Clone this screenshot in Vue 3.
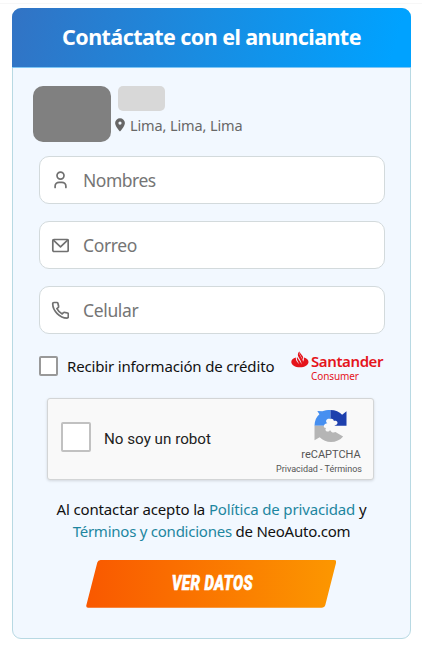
<script setup>
import { ref } from 'vue'

const fields = [
  { id: 'name', label: 'Nombres', type: 'text' },
  { id: 'mail', label: 'Correo', type: 'email' },
  { id: 'phone', label: 'Celular', type: 'tel' },
]
const values = ref({ name: '', mail: '', phone: '' })
</script>

<template>
  <main class="page">
    <section class="card">
      <header class="header"><h1>Contáctate con el anunciante</h1></header>
      <div class="seller">
        <div class="avatar"></div>
        <div class="seller-info">
          <div class="seller-name"></div>
          <div class="location">
            <svg width="10" height="14" viewBox="0 0 10 14"><path fill="#666" fill-rule="evenodd" d="M5 .3A4.900 4.900 0 0 0 .1 5.100C.1 8.500 5 13.600 5 13.600S9.900 8.500 9.900 5.100A4.900 4.900 0 0 0 5 .3ZM5 3.500a1.600 1.600 0 1 1 0 3.200 1.600 1.600 0 0 1 0-3.200Z" /></svg>
            <span>Lima, Lima, Lima</span>
          </div>
        </div>
      </div>

      <form class="form" @submit.prevent>
        <label v-for="f in fields" :key="f.id" class="field">
          <svg class="field-icon" width="18" height="18" viewBox="0 0 18 18" fill="none" stroke="#707070" stroke-width="1.700" stroke-linecap="round" stroke-linejoin="round">
            <template v-if="f.id === 'name'">
              <circle cx="9.500" cy="4.600" r="3.500" />
              <path d="M4.100 16.500v-1.200a4 4 0 0 1 4-4h2.800a4 4 0 0 1 4 4v1.200" />
            </template>
            <template v-else-if="f.id === 'mail'">
              <rect x="1.800" y="3.500" width="15.400" height="12" rx="1.200" />
              <path d="M2.400 4.200 9.500 10.800l7.100-6.600" />
            </template>
            <path v-else transform="translate(.5 .3)" d="M2.500 1.200h2.900q.8 0 1 .8l.7 3q.2.7-.4 1.200L5.400 7.400a13 13 0 0 0 5.300 5.300l1.200-1.300q.5-.6 1.200-.4l2.900.7q.8.2.8 1v2.800q0 1.300-1.300 1.300C8.300 16.500 1.300 9.700 1.200 2.500q0-1.300 1.300-1.300Z" />
          </svg>
          <input v-model="values[f.id]" :type="f.type" :class="f.id" :placeholder="f.label" />
        </label>

        <div class="credit">
          <span class="checkbox"></span>
          <span class="credit-text">Recibir información de crédito</span>
          <div class="santander">
            <svg width="18" height="18" viewBox="0 0 18 18" fill="#e5141b"><path d="M4.900 6.500C1.900 7.500.3 9 .3 10.900c0 3 3.800 5.300 8.600 5.300s8.600-2.300 8.600-5.300c0-2-1.700-3.600-4.500-4.400.1 1.900-.4 3.200-1 4.300-.1-1-.4-1.900-.9-2.800L8.600 3.400C8.200 2.500 8.100 1.600 8.300.6 6.700 2.300 6.500 4.200 7.400 5.800l2.200 3.900c.7 1.300 1 2.500.8 3.800-.2-.8-.5-1.500-.9-2.200L6 6.100c-.3 1.500-.1 2.500.5 3.600l1.700 3.500C5.500 10.600 4.500 8.600 4.900 6.500Z" /><path d="M8.500.5c-.5 1.500.1 2.500.7 3.500l2 3.500c.3.500.5 1 .6 1.600.7-1.600.5-2.800-.2-4L9.400 2.200C9 1.600 8.700 1.100 8.500.5Z" /></svg>
            <div class="santander-name"><b>Santander</b><span>Consumer</span></div>
          </div>
        </div>

        <div class="captcha">
          <span class="captcha-box"></span>
          <span class="captcha-label">No soy un robot</span>
          <div class="captcha-brand">
            <svg width="33" height="34" viewBox="0 0 33 34">
              <path fill="#468ff0" d="M16.500.9v9.300c-1.600-.8-3.800-.3-4.300 1.400-.4 1.200.2 2.100 1.200 2.700-1.700-.1-3 .8-3.600 2.500H.5C.6 11.700 2.300 7.800 5.400 5.200L3.300 1.900l5 .3C10.500 1.200 13.200.9 16.500.9Z" />
              <path fill="#1d3fad" d="M16.500.9c4.900 0 8.800 1.700 11.600 4.800l4.400-3.500v14.600H20.300c2.200-.7 3.400-1.700 3.200-3.200-.3-1.600-2-2.100-3.700-1.500.2-1.800-1.300-2.700-3.300-2.300Z" />
              <path fill="#b5b5b5" d="M.5 16.800h9.300c-.2 1.500.8 2.300 2.300 2.200-1.300 1.500-.5 3.500 1.600 3.500 1.200 0 1.900-.6 2.300-1.600 1.200 2.300 3.200 3.100 5.400 2.200l7.700 4.400c-3 3.600-7.200 5.500-12.100 5.500-4.300 0-8.300-1.500-11.300-4.700L.5 31.200Z" />
            </svg>
            <span class="captcha-name">reCAPTCHA</span>
            <span class="captcha-links">Privacidad - Términos</span>
          </div>
        </div>

        <p class="terms">
          <span class="line one">Al contactar acepto la <a>Política de privacidad</a> y</span>
          <span class="line two"><a>Términos y condiciones</a> de NeoAuto.com</span>
        </p>

        <button class="submit" type="submit">
          <svg class="shape" width="250" height="48" viewBox="0 0 250 48">
            <defs><linearGradient id="orange"><stop offset="0" stop-color="#f95800" /><stop offset="1" stop-color="#fc9700" /></linearGradient></defs>
            <path fill="url(#orange)" d="M14.500 0H248Q251 0 250 3L239.300 45Q238.500 47.700 235.500 47.700H2Q-.3 47.700.4 45L11.300 2.500Q12 0 14.500 0Z" />
          </svg>
          <span>VER DATOS</span>
        </button>
      </form>
    </section>
  </main>
</template>

<style>
body { margin: 0; background: #fff; }
</style>

<style scoped>
* { box-sizing: border-box; }
.page { height: 645px; padding: 8px 11px 0 12px; font-family: "Noto Sans", sans-serif; background: linear-gradient(#fff 3px, #f7f7f7 3px, #f7f7f7 4px, #fff 4px); }
.card { height: 631px; border: 1px solid #b8d9e3; border-radius: 9px; background: #f2f8ff; }
.header { margin: -1px -1px 0; height: 60px; padding-bottom: 2px; border-radius: 9px 9px 0 0; background: linear-gradient(105deg, #3273c4, #198ce1 48%, #00a2ff 95%); border-bottom: 1px solid #7dc6f5; display: flex; justify-content: center; align-items: center; }
h1 { margin: 0; color: #fff; font-size: 21.500px; line-height: 28px; font-weight: 700; letter-spacing: -.57px; white-space: nowrap; }
.seller { display: flex; gap: 4px; padding: 18px 0 0 20px; height: 88px; }
.avatar { width: 78px; height: 56px; border-radius: 10px; background: #808080; }
.seller-name { width: 47px; height: 25px; margin-left: 3px; border-radius: 5px; background: #d8d8d8; }
.location { display: flex; align-items: center; gap: 5px; margin-top: 4px; height: 20px; color: #686868; font-size: 14.500px; letter-spacing: -.12px; white-space: nowrap; }
.location span { margin-top: -1px; }
.form { padding: 0 26px; }
.field { display: flex; align-items: center; gap: 14px; width: 346px; height: 48px; margin-bottom: 17px; padding-left: 11px; border: 1px solid #d3dadc; border-radius: 10px; background: #fff; }
input { width: 260px; padding: 0; border: 0; outline: 0; background: transparent; font: 17.500px "Noto Sans", sans-serif; letter-spacing: -.5px; }
input.phone, input.mail { letter-spacing: -.35px; }
input::placeholder { color: #757575; opacity: 1; }
.credit { display: flex; align-items: center; height: 32px; }
.checkbox { width: 19px; height: 20px; margin: -2px 9px 0 0; border: 2px solid #999; border-radius: 2px; background: #fff; }
.credit-text { width: 224px; margin-top: -2px; font-size: 15px; letter-spacing: -.16px; color: #111; white-space: nowrap; }
.santander { display: flex; gap: 2px; height: 32px; color: #e5141b; }
.santander-name { display: flex; flex-direction: column; }
.santander-name b { height: 18px; font-size: 15px; line-height: 20px; font-weight: 600; letter-spacing: -.4px; }
.santander-name span { font-size: 10px; line-height: 15px; letter-spacing: -.1px; }
.captcha { display: flex; align-items: center; width: 327px; height: 82px; margin: 15px 0 0 8px; padding-left: 13px; background: #f9f9f9; border: 1px solid #d3d5d6; border-radius: 3px; box-shadow: 0 1px 3px #0002; font-family: Roboto, sans-serif; }
.captcha-box { flex: none; width: 30px; height: 30px; margin-top: -5px; border: 2px solid #c1c1c1; border-radius: 2px; background: #fff; }
.captcha-label { flex: none; width: 171px; margin-left: 13px; font-size: 15.200px; color: #222; }
.captcha-brand { flex: none; display: flex; flex-direction: column; align-items: center; width: 108px; height: 80px; margin-left: 1px; padding-top: 10px; color: #555; white-space: nowrap; }
.captcha-brand svg { margin-left: 1px; }
.captcha-name { margin: 5px 0 0 2px; font-size: 11px; line-height: 14px; }
.captcha-links { margin-right: 22px; font-size: 9px; line-height: 14px; letter-spacing: -.03px; }
.terms { margin: 18px 0 0; color: #111; font-size: 15px; line-height: 22px; }
.line { display: block; white-space: nowrap; text-align: center; }
.one { letter-spacing: -.15px; }
.two { letter-spacing: -.24px; }
.terms a { color: #1d86a0; }
.submit { display: grid; place-items: center; width: 250px; height: 48px; margin: 18px 0 0 47px; padding: 0; border: 0; background: none; }
.submit > * { grid-area: 1 / 1; }
.submit span { z-index: 1; margin: -2px 0 0 3px; color: #fff; font: italic 900 21px Roboto, sans-serif; letter-spacing: .5px; -webkit-text-stroke: .6px #fff; transform: scaleX(.72); white-space: nowrap; }
</style>
